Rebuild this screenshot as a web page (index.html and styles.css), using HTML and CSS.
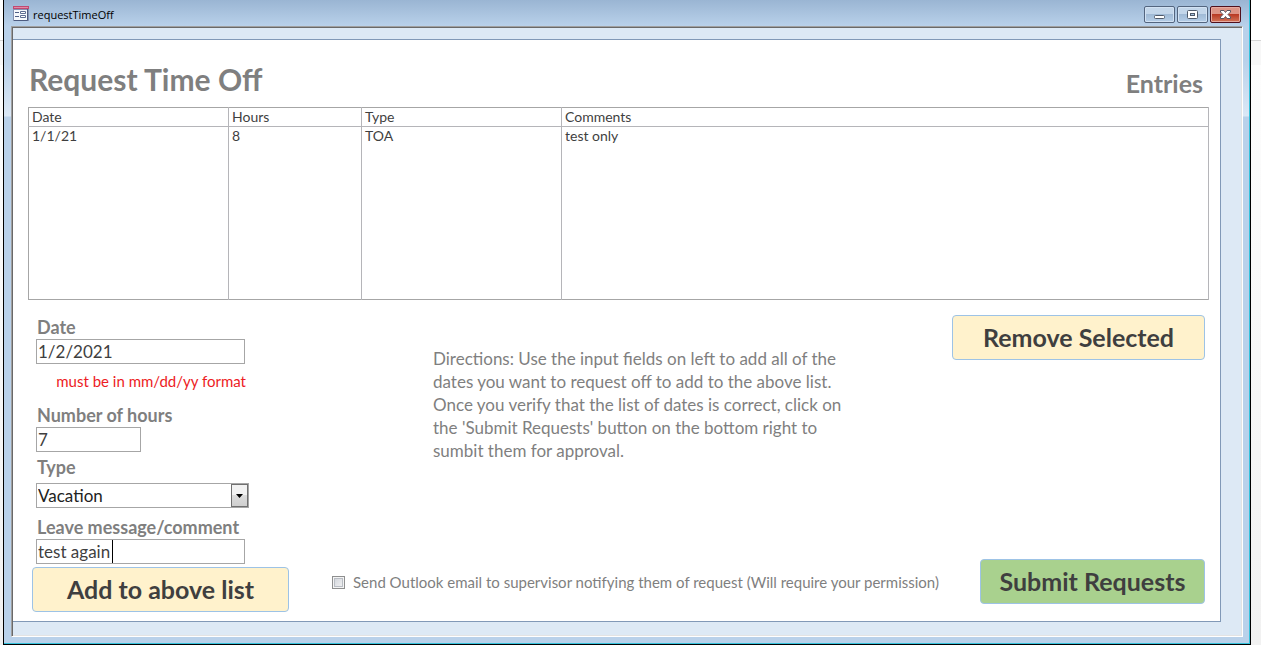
FILE: index.html
```html
<!DOCTYPE html>
<html lang="en">
<head>
<meta charset="utf-8">
<title>requestTimeOff</title>
<link rel="stylesheet" href="styles.css">
</head>
<body>
<main class="window">
  <header class="titlebar">
    <svg class="form-icon" width="16" height="15" viewBox="0 0 16 15" aria-hidden="true">
      <rect x="0" y="0" width="16" height="15" fill="#8793b3"/>
      <rect x="1" y="4" width="13" height="10" fill="#f7f9fd"/>
      <rect x="0" y="0" width="16" height="3" fill="#c04a72"/>
      <rect x="1" y="1" width="14" height="1" fill="#e08ba6"/>
      <path d="M2 6.500h4M2 10.500h4" stroke="#4f5f86"/>
      <path d="M7.500 5.500h5v2h-5zM7.500 9.500h5v2h-5z" fill="#fff" stroke="#5d6c92"/>
      <path d="M14.500 3v11.500H1" fill="none" stroke="#4d5c80"/>
    </svg>
    <span class="caption">requestTimeOff</span>
    <div class="controls">
      <button class="control" type="button" aria-label="Minimize">
        <svg width="31" height="16" viewBox="0 0 31 16"><rect x="10.500" y="8.500" width="10" height="3" rx="1" fill="#fff" stroke="#505a6a"/></svg>
      </button>
      <button class="control" type="button" aria-label="Maximize">
        <svg width="31" height="16" viewBox="0 0 31 16"><rect x="10.500" y="3.500" width="10" height="8" rx="1" fill="#fff" stroke="#505a6a"/><rect x="13.500" y="6.500" width="4" height="2" fill="#a9c4e0" stroke="#505a6a"/></svg>
      </button>
      <button class="control control-close" type="button" aria-label="Close">
        <svg width="31" height="16" viewBox="0 0 31 16"><path d="M10.500 3.500h3.500l1.500 2 1.500-2h3.500v1.500l-2.500 2.500 2.500 2.500v1.500H17l-1.500-2-1.500 2h-3.500V10l2.500-2.500L10.500 5z" fill="#fff" stroke="#5a5560"/></svg>
      </button>
    </div>
  </header>
  <div class="client">
    <form class="form">
      <div class="heading">
        <h1 class="title">Request Time Off</h1>
        <h2 class="subtitle">Entries</h2>
      </div>
      <table class="entries">
        <colgroup><col class="col-date"><col class="col-hours"><col class="col-type"><col></colgroup>
        <thead><tr><th>Date</th><th>Hours</th><th>Type</th><th>Comments</th></tr></thead>
        <tbody><tr><td>1/1/21</td><td>8</td><td>TOA</td><td>test only</td></tr></tbody>
      </table>
      <div class="lower">
        <div class="entry">
          <div class="fields">
            <label class="label" for="date">Date</label>
            <input class="input" id="date" type="text" value="1/2/2021" aria-describedby="hint">
            <p class="hint" id="hint">must be in mm/dd/yy format</p>
            <label class="label" for="hours">Number of hours</label>
            <input class="input input-short" id="hours" type="text" value="7">
            <label class="label label-type" for="type">Type</label>
            <div class="combo">
              <select class="input select" id="type"><option>Vacation</option></select>
              <span class="drop"><svg width="7" height="4" viewBox="0 0 7 4"><path d="M0 0h7L3.500 4z" fill="#000"/></svg></span>
            </div>
            <label class="label label-comment" for="comment">Leave message/comment</label>
            <div class="comment">
              <input class="input" id="comment" type="text" value="test again">
              <span class="caret"></span>
            </div>
          </div>
          <button class="button" type="button">Add to above list</button>
        </div>
        <div class="info">
          <p class="directions">Directions: Use the input fields on left to add all of the dates you want to request off to add to the above list. Once you verify that the list of dates is correct, click on the 'Submit Requests' button on the bottom right to sumbit them for approval.</p>
          <div class="notify">
            <input class="check" id="notify" type="checkbox">
            <label for="notify">Send Outlook email to supervisor notifying them of request (Will require your permission)</label>
          </div>
        </div>
        <div class="actions">
          <button class="button button-remove" type="button">Remove Selected</button>
          <button class="button button-submit" type="button">Submit Requests</button>
        </div>
      </div>
    </form>
  </div>
</main>
</body>
</html>
```
FILE: styles.css
```css
* { box-sizing: border-box; }

body {
  margin: 0;
  min-height: 100vh;
  display: flex;
  padding: 0 10px 0 3px;
  font-family: Lato, "Open Sans", sans-serif;
  color: #3f3f3f;
  background: linear-gradient(#fff 40px, #d5d5d5 40px, #d5d5d5 41px, #f7f7f7 41px, #f7f7f7 65px, #fdfdfd 65px, #f1f1f1);
}

h1, h2, p { margin: 0; }

.window {
  flex: 1;
  display: flex;
  flex-direction: column;
  padding: 0 7px 7px;
  border: 1px solid #000;
  border-top: 0;
  box-shadow: inset -1px -1px #35c3dc;
  background: linear-gradient(#9ab5d3, #b9d1ea 26px, #b9d1ea 60px, #dbe8f6 116px, #b9d1ea 117px);
}

.titlebar {
  display: flex;
  align-items: center;
  height: 26px;
  padding: 0 0 0 2px;
}

.form-icon { margin-top: 1px; }

.caption {
  flex: 1;
  padding: 3px 0 0 4px;
  font: 11px/16px "Open Sans", sans-serif;
  color: #000;
}

.controls {
  display: flex;
  gap: 2px;
  padding: 3px 2px 0 0;
}

.control {
  display: flex;
  width: 31px;
  height: 17px;
  padding: 0;
  border: 1px solid #53657f;
  border-radius: 2px;
  justify-content: center;
  align-items: center;
  overflow: hidden;
  box-shadow: inset 0 0 0 1px #d2e2f3;
  background: linear-gradient(#c3d6ea 50%, #a0bad6 50%, #b5cee8);
}

.control svg { flex: none; }

.control-close {
  border-color: #50101c;
  box-shadow: inset 0 0 0 1px #e6aaa0;
  background: linear-gradient(#dd9486 45%, #b93a24 50%, #d37558);
}

.client {
  flex: 1;
  display: flex;
  border: 1px solid;
  border-color: #a0a0a0 #fff #fff #a0a0a0;
  box-shadow: inset 1px 1px #696969, inset -1px -1px #e3e3e3;
  padding: 12px 21px 14px 1px;
  background: #dde9f5;
}

.form {
  flex: 1;
  display: flex;
  flex-direction: column;
  padding: 20px 11px 9px 15px;
  border: 1px solid #8199b7;
  border-left: 0;
  background: #fff;
}

.heading {
  display: flex;
  justify-content: space-between;
  align-items: flex-end;
  height: 47px;
  padding: 0 6px 8px 1px;
  color: #7f7f7f;
}

.title { font-size: 30px; line-height: 40px; }
.subtitle { font-size: 25px; line-height: 32px; }

.entries {
  width: 100%;
  height: 193px;
  table-layout: fixed;
  border-collapse: collapse;
  border: 1px solid #a6a6a6;
  font-size: 14px;
  line-height: 18px;
}

.col-date { width: 200px; }
.col-hours { width: 133px; }
.col-type { width: 200px; }

.entries th, .entries td {
  padding: 0 3px;
  text-align: left;
  vertical-align: top;
  font-weight: 400;
  border-right: 1px solid #b5b5b9;
}

.entries th { height: 19px; border-bottom: 1px solid #b5b5b9; }

.lower {
  flex: 1;
  display: grid;
  grid-template-columns: 257px minmax(0, 1fr) auto;
  padding: 15px 4px 0;
}

.entry {
  display: flex;
  flex-direction: column;
}

.fields {
  display: flex;
  flex-direction: column;
  align-items: flex-start;
  padding: 0 0 3px 4px;
}

.label {
  padding-left: 1px;
  font-size: 18px;
  font-weight: 700;
  line-height: 24px;
  color: #7f7f7f;
}

.label-type { padding-bottom: 7px; }
.label-comment { padding-top: 7px; }

.input {
  display: block;
  width: 209px;
  height: 25px;
  padding: 0 1px;
  border: 1px solid #a6a6a6;
  border-radius: 0;
  font: 17px/23px Lato, "Open Sans", sans-serif;
  color: #3f3f3f;
  background: #fff;
}

.input-short { width: 105px; }

.label-type { padding-top: 3px; padding-bottom: 4px; }

.hint {
  width: 210px;
  padding: 8px 0 13px;
  text-align: right;
  font-size: 15px;
  line-height: 18px;
  color: #ed1c24;
}

.combo, .comment { position: relative; }

.select {
  width: 213px;
  appearance: none;
  color: #222;
}

.drop {
  position: absolute;
  top: 1px;
  right: 1px;
  display: flex;
  align-items: center;
  justify-content: center;
  width: 17px;
  height: 23px;
  border: 1px solid #707070;
  background: linear-gradient(#f2f2f2 50%, #dcdcdc 50%, #cfcfcf);
  pointer-events: none;
}

.caret {
  position: absolute;
  top: 1px;
  left: 76px;
  width: 1px;
  height: 23px;
  background: #000;
}

.button {
  height: 45px;
  padding: 0 0 2px;
  border: 1px solid #9dc3e6;
  border-radius: 4px;
  font: 700 25px/32px Lato, "Open Sans", sans-serif;
  color: #3f3f3f;
  background: #fff2cc;
}

.info {
  display: flex;
  flex-direction: column;
  justify-content: space-between;
  padding: 32px 0 20px 43px;
}

.directions {
  width: 432px;
  margin-left: 101px;
  font-size: 17px;
  line-height: 23px;
  color: #7f7f7f;
}

.notify {
  display: flex;
  align-items: center;
  gap: 8px;
  font-size: 15px;
  line-height: 20px;
  color: #7f7f7f;
  white-space: nowrap;
}

.check {
  appearance: none;
  width: 13px;
  height: 13px;
  margin: 0;
  border: 1px solid #8e8f8f;
  box-shadow: inset 0 0 0 1px #f4f4f4, inset 0 0 0 2px #b9bdc4;
  background: linear-gradient(135deg, #cdd1d8, #f6f6f6);
}

.actions {
  display: flex;
  flex-direction: column;
  justify-content: space-between;
  align-items: flex-end;
  padding-bottom: 8px;
}

.button-remove { width: 253px; }
.button-submit { width: 225px; background: #a9d18e; }
```
